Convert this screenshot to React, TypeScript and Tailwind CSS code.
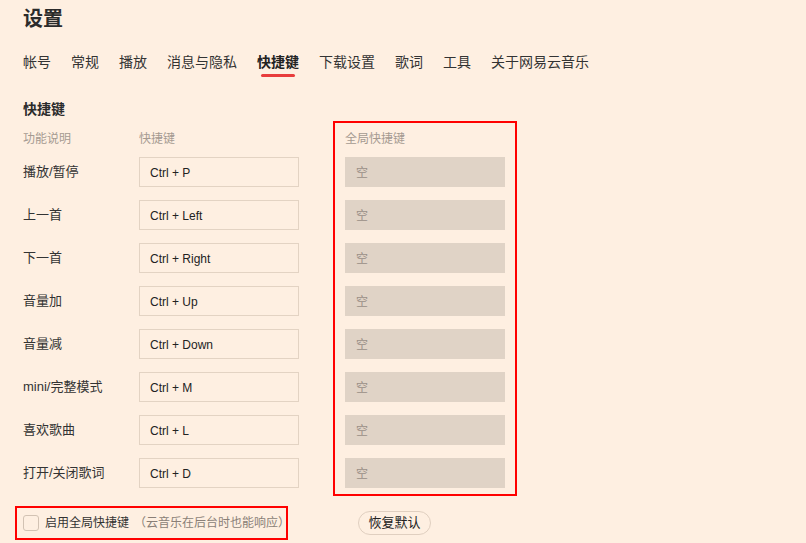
import * as React from "react"

const tabs = ["帐号", "常规", "播放", "消息与隐私", "快捷键", "下载设置", "歌词", "工具", "关于网易云音乐"]

const shortcuts = [
    { name: "播放/暂停", key: "Ctrl + P" },
    { name: "上一首", key: "Ctrl + Left" },
    { name: "下一首", key: "Ctrl + Right" },
    { name: "音量加", key: "Ctrl + Up" },
    { name: "音量减", key: "Ctrl + Down" },
    { name: "mini/完整模式", key: "Ctrl + M" },
    { name: "喜欢歌曲", key: "Ctrl + L" },
    { name: "打开/关闭歌词", key: "Ctrl + D" },
]

export default function App() {
    return (
        <div
            className="w-[806px] h-[543px] overflow-hidden bg-[#feefe1] text-[#333] px-[23px]"
            style={{ fontFamily: '"Liberation Sans", "Noto Sans CJK SC", sans-serif' }}
        >
            {/* ── Title ── */}
            <h1 className="pt-[5px] text-[20px] leading-[28px] font-bold text-[#2b2b2b]">设置</h1>

            {/* ── Tabs ── */}
            <nav className="mt-[19px] flex gap-[20px]">
                {tabs.map(t => {
                    const active = t === "快捷键"
                    return (
                        <div key={t} className="flex flex-col">
                            <span className={`text-[14px] leading-[20px] ${active ? "font-bold text-[#222]" : "text-[#333]"}`}>{t}</span>
                            <span className={`mt-[2px] mx-[4px] h-[3px] rounded-full ${active ? "bg-[#e83c3c]" : "bg-transparent"}`} />
                        </div>
                    )
                })}
            </nav>

            {/* ── Section ── */}
            <h2 className="mt-[22px] text-[14px] leading-[20px] font-bold text-[#2b2b2b]">快捷键</h2>

            <div className="mt-[2px] flex">
                <div className="pt-[10px] flex">
                    <div className="w-[116px] flex flex-col">
                        <div className="h-[16px] text-[12px] leading-[16px] text-[#a59a91]">功能说明</div>
                        <div className="mt-[10px] flex flex-col gap-[13px]">
                            {shortcuts.map(s => (
                                <div key={s.name} className="h-[30px] text-[13px] leading-[30px] text-[#333]">{s.name}</div>
                            ))}
                        </div>
                    </div>
                    <div className="w-[160px] flex flex-col">
                        <div className="h-[16px] text-[12px] leading-[16px] text-[#a59a91]">快捷键</div>
                        <div className="mt-[10px] flex flex-col gap-[13px]">
                            {shortcuts.map(s => (
                                <div key={s.key} className="h-[30px] border border-[#e3d3c3] bg-[#feefe1] pl-[10px] pt-[1px] flex items-center text-[12px] text-[#222]">
                                    {s.key}
                                </div>
                            ))}
                        </div>
                    </div>
                </div>

                {/* Global column */}
                <div className="ml-[34px] w-[184px] border-2 border-[#ff0000] px-[10px] pt-[8px] pb-[6px] flex flex-col">
                    <div className="h-[16px] text-[12px] leading-[16px] text-[#a59a91]">全局快捷键</div>
                    <div className="mt-[10px] flex flex-col gap-[13px]">
                        {shortcuts.map(s => (
                            <div key={s.name} className="h-[30px] bg-[#e0d3c6] pl-[11px] pt-[1px] flex items-center text-[12px] text-[#9a8f87]">
                                空
                            </div>
                        ))}
                    </div>
                </div>
            </div>

            {/* ── Footer ── */}
            <div className="mt-[10px] flex items-center">
                <label className="-ml-[8px] w-[273px] h-[34px] border-2 border-[#ff0000] pl-[6px] flex items-center gap-[6px] whitespace-nowrap">
                    <span className="shrink-0 w-[16px] h-[16px] rounded-[3px] border border-[#d2c2b3] bg-[#feefe1]" />
                    <span className="text-[12px] text-[#333]">
                        启用全局快捷键
                        <span className="ml-[5px] text-[12px] text-[#8a7f77]">（云音乐在后台时也能响应）</span>
                    </span>
                </label>
                <button className="ml-[70px] h-[24px] w-[73px] rounded-full border border-[#e0cfc0] text-[13px] text-[#222] flex items-center justify-center">
                    恢复默认
                </button>
            </div>
        </div>
    )
}
